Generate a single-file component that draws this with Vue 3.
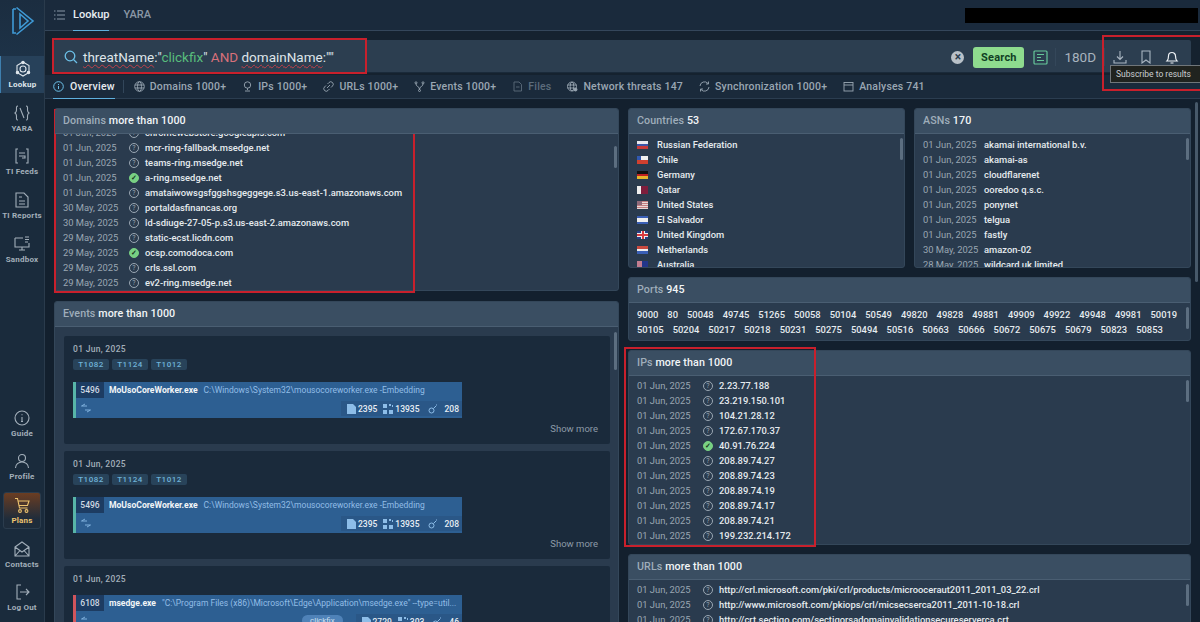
<script setup>
const navTop = [
  { label: 'Lookup', icon: 'hex', active: true },
  { label: 'YARA', icon: 'yara' },
  { label: 'TI Feeds', icon: 'feed' },
  { label: 'TI Reports', icon: 'report' },
  { label: 'Sandbox', icon: 'sandbox' }
]
const navBottom = [
  { label: 'Guide', icon: 'guide' },
  { label: 'Profile', icon: 'profile' },
  { label: 'Plans', icon: 'cart', plans: true },
  { label: 'Contacts', icon: 'mail' },
  { label: 'Log Out', icon: 'logout' }
]
const tabs = [
  { label: 'Domains 1000+', icon: 'globe' },
  { label: 'IPs 1000+', icon: 'pin' },
  { label: 'URLs 1000+', icon: 'link' },
  { label: 'Events 1000+', icon: 'fork' },
  { label: 'Files', icon: 'file', off: true },
  { label: 'Network threats 147', icon: 'net' },
  { label: 'Synchronization 1000+', icon: 'sync' },
  { label: 'Analyses 741', icon: 'cal' }
]
const domains = [
  ['01 Jun, 2025', 'chromewebstore.googleapis.com'],
  ['01 Jun, 2025', 'mcr-ring-fallback.msedge.net'],
  ['01 Jun, 2025', 'teams-ring.msedge.net'],
  ['01 Jun, 2025', 'a-ring.msedge.net', true],
  ['01 Jun, 2025', 'amataiwowsgsfggshsgeggege.s3.us-east-1.amazonaws.com'],
  ['30 May, 2025', 'portaldasfinancas.org'],
  ['30 May, 2025', 'ld-sdiuge-27-05-p.s3.us-east-2.amazonaws.com'],
  ['29 May, 2025', 'static-ecst.licdn.com'],
  ['29 May, 2025', 'ocsp.comodoca.com', true],
  ['29 May, 2025', 'crls.ssl.com'],
  ['29 May, 2025', 'ev2-ring.msedge.net']
]
const ips = [
  ['01 Jun, 2025', '2.23.77.188'],
  ['01 Jun, 2025', '23.219.150.101'],
  ['01 Jun, 2025', '104.21.28.12'],
  ['01 Jun, 2025', '172.67.170.37'],
  ['01 Jun, 2025', '40.91.76.224', true],
  ['01 Jun, 2025', '208.89.74.27'],
  ['01 Jun, 2025', '208.89.74.23'],
  ['01 Jun, 2025', '208.89.74.19'],
  ['01 Jun, 2025', '208.89.74.17'],
  ['01 Jun, 2025', '208.89.74.21'],
  ['01 Jun, 2025', '199.232.214.172']
]
const urls = [
  ['01 Jun, 2025', 'http://crl.microsoft.com/pki/crl/products/microoceraut2011_2011_03_22.crl'],
  ['01 Jun, 2025', 'http://www.microsoft.com/pkiops/crl/micsecserca2011_2011-10-18.crl'],
  ['01 Jun, 2025', 'http://crt.sectigo.com/sectigorsadomainvalidationsecureserverca.crt']
]
const countries = [
  ['ru', 'Russian Federation'],
  ['cl', 'Chile'],
  ['de', 'Germany'],
  ['qa', 'Qatar'],
  ['us', 'United States'],
  ['sv', 'El Salvador'],
  ['gb', 'United Kingdom'],
  ['nl', 'Netherlands'],
  ['au', 'Australia']
]
const asns = [
  ['01 Jun, 2025', 'akamai international b.v.'],
  ['01 Jun, 2025', 'akamai-as'],
  ['01 Jun, 2025', 'cloudflarenet'],
  ['01 Jun, 2025', 'ooredoo q.s.c.'],
  ['01 Jun, 2025', 'ponynet'],
  ['01 Jun, 2025', 'telgua'],
  ['01 Jun, 2025', 'fastly'],
  ['30 May, 2025', 'amazon-02'],
  ['28 May, 2025', 'wildcard uk limited']
]
const ports = [
  '9000', '80', '50048', '49745', '51265', '50058', '50104', '50549', '49820', '49828', '49881', '49909', '49922', '49948', '49981', '50019',
  '50105', '50204', '50217', '50218', '50231', '50275', '50494', '50516', '50663', '50666', '50672', '50675', '50679', '50823', '50853',
  '50887', '51105', '51155', '51217', '51233', '51340', '49750', '49884', '49910', '49933', '49957', '49915', '49953', '50151', '50140'
]
const events = [
  { tags: ['T1082', 'T1124', 'T1012'], pid: '5496', name: 'MoUsoCoreWorker.exe', cmd: 'C:\\Windows\\System32\\mousocoreworker.exe -Embedding', stats: ['2395', '13935', '208'], more: true },
  { tags: ['T1082', 'T1124', 'T1012'], pid: '5496', name: 'MoUsoCoreWorker.exe', cmd: 'C:\\Windows\\System32\\mousocoreworker.exe -Embedding', stats: ['2395', '13935', '208'], more: true },
  { tags: [], pid: '6108', name: 'msedge.exe', cmd: '"C:\\Program Files (x86)\\Microsoft\\Edge\\Application\\msedge.exe" --type=util...', stats: ['2729', '303', '46'], danger: true }
]
</script>

<template>
  <div class="app">
    <aside class="sidebar">
      <div class="logo">
        <svg width="26" height="30" viewBox="0 0 26 30" fill="none" stroke="#3f9ad6" stroke-width="1.6">
          <path d="M4 3v24l3 0M4 3h3" />
          <path d="M7.5 1.5 24 15 7.5 28.500" />
          <path d="M11 8 19 15 11 22Z" />
        </svg>
      </div>
      <div v-for="item in navTop" :key="item.label" :class="['nav-item', { active: item.active }]">
        <svg width="18" height="18" viewBox="0 0 18 18" fill="none" stroke="currentColor" stroke-width="1.100">
          <template v-if="item.icon === 'hex'">
            <path d="M9 2l6 3.500v7L9 16l-6-3.500v-7z" />
            <circle cx="9" cy="9" r="3" />
            <circle cx="9" cy="2.500" r="1.200" fill="currentColor" />
            <circle cx="3.500" cy="12.500" r="1.200" fill="currentColor" />
            <circle cx="14.500" cy="12.500" r="1.200" fill="currentColor" />
          </template>
          <template v-else-if="item.icon === 'yara'">
            <path d="M5 2C3 2 3.500 4 3.500 6S3.500 8 2 9c1.500 1 1.500 1 1.500 3s-.5 4 1.500 4M13 2c2 0 1.500 2 1.500 4s0 2 1.500 3c-1.500 1-1.500 1-1.500 3s.5 4-1.500 4M7 4l4 10" />
          </template>
          <template v-else-if="item.icon === 'feed'">
            <path d="M5 2H3v14h2M13 2h2v14h-2M6 6h6M6 9h6v2H9" />
          </template>
          <template v-else-if="item.icon === 'report'">
            <path d="M3 2h8l4 4v10H3zM6 6h3M6 10h6M6 13h6" />
          </template>
          <template v-else-if="item.icon === 'sandbox'">
            <path d="M2 3h8M2 3v9h14V8M6 15h6M9 12v3M12 2h4M12 4.500h4M12 7h3" />
          </template>
        </svg>
        <span>{{ item.label }}</span>
      </div>
      <div class="nav-spacer"></div>
      <div v-for="item in navBottom" :key="item.label" :class="['nav-item', { plans: item.plans }]">
        <svg width="18" height="18" viewBox="0 0 18 18" fill="none" stroke="currentColor" stroke-width="1.100">
          <template v-if="item.icon === 'guide'">
            <circle cx="9" cy="9" r="7" />
            <path d="M9 8v4.500M8 12.500h2M9 5.200v1" />
          </template>
          <template v-else-if="item.icon === 'profile'">
            <circle cx="9" cy="6" r="3.500" />
            <path d="M2.500 16c0-3.500 3-6 6.500-6s6.500 2.500 6.500 6" />
          </template>
          <template v-else-if="item.icon === 'cart'">
            <path d="M2 2.500h2.500l2 9.500h8M5 5h11l-1.500 4.500H6" />
            <circle cx="7" cy="15" r="1.400" />
            <circle cx="13.500" cy="15" r="1.400" />
          </template>
          <template v-else-if="item.icon === 'mail'">
            <path d="M2 7l7-5 7 5v9H2zM2 7l7 5 7-5M2 16l5-5.500M16 16l-5-5.500" />
          </template>
          <template v-else-if="item.icon === 'logout'">
            <path d="M8 2H4v14h4M7 9h9M13 6l3 3-3 3" />
          </template>
        </svg>
        <span>{{ item.label }}</span>
      </div>
    </aside>

    <div class="main">
      <header class="topbar">
        <svg class="menu-icon" width="11" height="10" viewBox="0 0 11 10" fill="none" stroke="#8796a5">
          <path d="M0 1h1.500M3 1h8M0 5h1.500M3 5h8M0 9h1.500M3 9h8" />
        </svg>
        <span class="top-tab current">Lookup</span>
        <span class="top-tab">YARA</span>
        <div class="redacted"></div>
      </header>

      <div class="query-wrap">
        <div class="query">
          <svg class="search-icon" width="14" height="14" viewBox="0 0 14 14" fill="none" stroke="#6cc0e8" stroke-width="1.300">
            <circle cx="6" cy="6" r="4.800" />
            <path d="M9.500 9.500 13 13" />
          </svg>
          <div class="query-text"><span class="squiggle">threatName</span>:"<span class="q-green">clickfix</span>" <span class="q-red">AND</span> <span class="squiggle">domainName</span>:""</div>
          <div class="clear">×</div>
          <button class="search-btn">Search</button>
          <svg class="doc-icon" width="15" height="15" viewBox="0 0 15 15" fill="none" stroke="#66c79a" stroke-width="1.200">
            <rect x="1" y="1" width="13" height="13" rx="1" />
            <path d="M4 4.500h7M4 7.500h4M4 10.500h7" />
          </svg>
          <i class="divider doc-divider"></i>
          <span class="range">180D</span>
          <i class="divider"></i>
          <svg class="act first" width="14" height="14" viewBox="0 0 14 14" fill="none" stroke="#aab6c2" stroke-width="1.100">
            <path d="M7 1v8M4 6.500 7 9.500l3-3M1 10v3h12v-3" />
          </svg>
          <svg class="act" width="14" height="14" viewBox="0 0 14 14" fill="none" stroke="#aab6c2" stroke-width="1.100">
            <path d="M3 1h8v12L7 10l-4 3z" />
          </svg>
          <svg class="act" width="14" height="14" viewBox="0 0 14 14" fill="none" stroke="#eef2f5" stroke-width="1.200">
            <path d="M2 11h10c-1-1-1.500-2-1.500-5a3.500 3.500 0 0 0-7 0c0 3-.5 4-1.500 5zM5.500 13h3" />
          </svg>
        </div>
      </div>

      <nav class="tabs">
        <div class="tab overview">
          <svg width="11" height="11" viewBox="0 0 11 11" fill="none" stroke="#6cc0e8">
            <circle cx="5.500" cy="5.500" r="4.800" />
            <path d="M5.500 5v3M5.500 3v1" />
          </svg>
          <span>Overview</span>
        </div>
        <i class="tab-sep"></i>
        <div v-for="tab in tabs" :key="tab.label" :class="['tab', { off: tab.off }]">
          <svg width="11" height="11" viewBox="0 0 11 11" fill="none" stroke="currentColor" stroke-width=".9">
            <template v-if="tab.icon === 'globe'">
              <circle cx="5.500" cy="5.500" r="4.800" />
              <ellipse cx="5.500" cy="5.500" rx="2" ry="4.800" />
              <path d="M1 4h9M1 7h9" />
            </template>
            <template v-else-if="tab.icon === 'pin'">
              <circle cx="5.500" cy="4" r="3.200" />
              <path d="M5.500 7.200V9M3 10h5" />
            </template>
            <template v-else-if="tab.icon === 'link'">
              <path d="M4.500 3 6 1.500a2 2 0 0 1 3.500 3.500L8 6.500M6.500 8 5 9.500A2 2 0 0 1 1.500 6L3 4.500M4 7l3-3" />
            </template>
            <template v-else-if="tab.icon === 'fork'">
              <circle cx="2" cy="1.800" r="1" />
              <circle cx="9" cy="1.800" r="1" />
              <circle cx="5.500" cy="9.500" r="1" />
              <path d="M2 3c0 3 3.500 2 3.500 5.500M9 3c0 3-3.500 2-3.500 5.500" />
            </template>
            <template v-else-if="tab.icon === 'file'">
              <path d="M2 1h5l2.500 2.500V10H2zM4 6h3.500" />
            </template>
            <template v-else-if="tab.icon === 'net'">
              <circle cx="5" cy="5.500" r="4.500" />
              <ellipse cx="5" cy="5.500" rx="1.800" ry="4.500" />
              <path d="M.5 4h9M.5 7h7" />
              <circle cx="8.500" cy="8.500" r="1.500" fill="currentColor" />
            </template>
            <template v-else-if="tab.icon === 'sync'">
              <path d="M1 5a4.500 4.500 0 0 1 8-2.500M10 6a4.500 4.500 0 0 1-8 2.500M9.500 .5v2.500H7M1.500 10.500V8H4" />
            </template>
            <template v-else-if="tab.icon === 'cal'">
              <rect x="1" y="1.500" width="9" height="8.500" />
              <path d="M1 4h9" />
            </template>
          </svg>
          <span>{{ tab.label }}</span>
        </div>
      </nav>

      <div class="content">
        <div class="col-left">
          <section class="panel domains">
            <h3 class="panel-head">Domains <b>more than 1000</b></h3>
            <div class="list clip-first">
              <div v-for="row in domains" :key="row[1]" class="row">
                <span class="date">{{ row[0] }}</span>
                <span :class="['status', { ok: row[2] }]">{{ row[2] ? '✓' : '?' }}</span>
                <span class="value">{{ row[1] }}</span>
              </div>
            </div>
            <i class="thumb thumb-domains"></i>
          </section>

          <section class="panel events">
            <h3 class="panel-head">Events <b>more than 1000</b></h3>
            <div class="event-list">
              <article v-for="(ev, i) in events" :key="i" class="event">
                <div class="event-date">01 Jun, 2025</div>
                <div v-if="ev.tags.length" class="event-tags">
                  <span v-for="t in ev.tags" :key="t" class="mitre">{{ t }}</span>
                </div>
                <div :class="['proc', { danger: ev.danger }]">
                  <div class="proc-top">
                    <span class="pid">{{ ev.pid }}</span>
                    <span class="proc-name">{{ ev.name }}</span>
                    <span class="proc-cmd">{{ ev.cmd }}</span>
                  </div>
                  <div class="proc-bottom">
                    <svg class="proc-arrows" width="12" height="10" viewBox="0 0 12 10" fill="none" stroke="#7fb0dc">
                      <path d="M5 1 1.500 3H7M7 9l3.500-2H5" />
                    </svg>
                    <span v-if="ev.danger" class="proc-flag">clickfix</span>
                    <div class="proc-stats">
                      <span class="stat">
                        <svg width="9" height="10" viewBox="0 0 9 10" fill="#8dbde8"><path d="M0 0h6l3 3v7H0z" /></svg>{{ ev.stats[0] }}
                      </span>
                      <span class="stat">
                        <svg width="10" height="10" viewBox="0 0 10 10" fill="#8dbde8"><path d="M0 0h4v4H0zM0 6h4v4H0zM6 6h4v4H6zM6 0h2v2H6zM9 1h1v2H9z" /></svg>{{ ev.stats[1] }}
                      </span>
                      <span class="stat">
                        <svg width="10" height="10" viewBox="0 0 10 10" fill="none" stroke="#8dbde8"><circle cx="3.500" cy="6.500" r="2.500" /><path d="M5.500 4.500 8 2M8.500 .5v1" /></svg><em>{{ ev.stats[2] }}</em>
                      </span>
                    </div>
                  </div>
                </div>
                <div v-if="ev.more" class="show-more">Show more</div>
              </article>
            </div>
            <i class="thumb thumb-events"></i>
          </section>
        </div>

        <div class="col-right">
          <div class="pair">
            <section class="panel small">
              <h3 class="panel-head">Countries <b>53</b></h3>
              <div class="list">
                <div v-for="c in countries" :key="c[0]" class="row">
                  <span :class="['flag', 'flag-' + c[0]]"></span>
                  <span class="value">{{ c[1] }}</span>
                </div>
              </div>
              <i class="thumb thumb-small"></i>
            </section>
            <section class="panel small">
              <h3 class="panel-head">ASNs <b>170</b></h3>
              <div class="list">
                <div v-for="a in asns" :key="a[1]" class="row">
                  <span class="date asn-date">{{ a[0] }}</span>
                  <span class="value">{{ a[1] }}</span>
                </div>
              </div>
              <i class="thumb thumb-small"></i>
            </section>
          </div>

          <section class="panel ports">
            <h3 class="panel-head">Ports <b>945</b></h3>
            <div class="port-list">
              <span v-for="p in ports" :key="p">{{ p }}</span>
            </div>
            <i class="thumb thumb-ports"></i>
          </section>

          <section class="panel ips">
            <h3 class="panel-head">IPs <b>more than 1000</b></h3>
            <div class="list">
              <div v-for="row in ips" :key="row[1]" class="row">
                <span class="date">{{ row[0] }}</span>
                <span :class="['status', { ok: row[2] }]">{{ row[2] ? '✓' : '?' }}</span>
                <span class="value">{{ row[1] }}</span>
              </div>
            </div>
            <i class="thumb thumb-small"></i>
          </section>

          <section class="panel urls">
            <h3 class="panel-head">URLs <b>more than 1000</b></h3>
            <div class="list">
              <div v-for="row in urls" :key="row[1]" class="row">
                <span class="date">{{ row[0] }}</span>
                <span class="status">?</span>
                <span class="value">{{ row[1] }}</span>
              </div>
            </div>
            <i class="thumb thumb-small"></i>
          </section>
        </div>
        <i class="page-thumb"></i>
      </div>
    </div>

    <!-- red marks drawn over the capture -->
    <div class="mark mark-query"></div>
    <div class="mark mark-domains"></div>
    <div class="mark mark-ips"></div>
    <div class="mark mark-actions"></div>
    <div class="tooltip">Subscribe to results</div>
  </div>
</template>

<style>
html, body {
  margin: 0;
  background: #13202e;
}
</style>

<style scoped>
.app {
  position: relative;
  display: flex;
  width: 1200px;
  height: 622px;
  overflow: hidden;
  background: #13202e;
  font-family: Roboto, "Liberation Sans", sans-serif;
  color: #e4e9ee;
}

/* sidebar */
.sidebar {
  width: 44px;
  flex-shrink: 0;
  display: flex;
  flex-direction: column;
  background: #1a2b3c;
  border-right: 1px solid #2a3b4c;
}
.logo {
  height: 56px;
  flex-shrink: 0;
  display: flex;
  justify-content: center;
  padding-top: 6px;
  box-sizing: border-box;
  background: linear-gradient(180deg, #1b2d40, #1d3247);
}
.nav-item {
  height: 37px;
  margin-bottom: 6.700px;
  flex-shrink: 0;
  box-sizing: border-box;
  display: flex;
  flex-direction: column;
  align-items: center;
  justify-content: center;
  gap: 2px;
  color: #a3afba;
  font-size: 8px;
  font-weight: 700;
  letter-spacing: .2px;
  white-space: nowrap;
}
.nav-item:last-child {
  margin-bottom: 5.700px;
}
.nav-item.active {
  color: #dfe6ec;
  background: #27415a;
  border-left: 1px solid #3e7fae;
}
.nav-item.plans {
  margin: 0 3px 6.700px;
  color: #eec46f;
  border: 1px solid #2b3c4d;
  border-radius: 3px;
  background: linear-gradient(180deg, #6b3d22, #1e2c3b 75%);
}
.nav-spacer {
  flex: 1;
}

/* top */
.main {
  flex: 1;
  min-width: 0;
  display: flex;
  flex-direction: column;
}
.topbar {
  height: 30px;
  flex-shrink: 0;
  display: flex;
  align-items: center;
  padding-left: 9px;
  background: #1a2a3c;
  border-bottom: 1px solid #34465a;
}
.menu-icon {
  margin-right: 8px;
}
.top-tab {
  position: relative;
  margin-right: 14px;
  font-size: 11px;
  font-weight: 500;
  color: #8a98a6;
  line-height: 30px;
}
.top-tab.current {
  color: #e8edf2;
}
.top-tab.current::after {
  content: "";
  position: absolute;
  left: 0;
  right: 0;
  bottom: -1px;
  height: 1px;
  background: #5fb0de;
}
.redacted {
  width: 233px;
  height: 15px;
  margin-left: auto;
  margin-right: 2px;
  background: #000;
}
.query-wrap {
  height: 44px;
  flex-shrink: 0;
  box-sizing: border-box;
  padding: 9px 9px 0 8px;
  background: #15222f;
}
.query {
  height: 33px;
  display: flex;
  align-items: center;
  padding: 2px 0 0 11px;
  box-sizing: border-box;
  background: #2c3e50;
  border-radius: 2px 2px 0 0;
  border-bottom: 1px solid #1a2a3a;
}
.query-text {
  margin-left: 5px;
  font-size: 13.500px;
  color: #dfe5ea;
  white-space: nowrap;
}
.squiggle {
  text-decoration: underline wavy #c2404a 1px;
  text-underline-offset: 2px;
}
.q-green {
  color: #58bd7c;
}
.q-red {
  color: #d8707a;
}
.clear {
  width: 13px;
  height: 13px;
  margin-left: auto;
  border-radius: 50%;
  background: #b9c1c8;
  color: #2c3e50;
  font-size: 12px;
  font-weight: 700;
  line-height: 13px;
  text-align: center;
}
.search-btn {
  width: 51px;
  height: 21px;
  margin-left: 9px;
  padding: 0;
  border: 0;
  border-radius: 3px;
  background: #8edb8e;
  color: #123f24;
  font-family: inherit;
  font-size: 11px;
  font-weight: 700;
  letter-spacing: .2px;
}
.doc-icon {
  margin-left: 9px;
}
.divider {
  width: 1px;
  height: 18px;
  margin-left: 8px;
  background: #34475a;
}
.doc-divider {
  margin-left: 7px;
}
.range {
  margin-left: 8px;
  font-size: 13.500px;
  color: #a8b3be;
}
.act {
  margin-left: 12px;
}
.act.first {
  margin-left: 8px;
}
.act:last-child {
  margin-right: 12px;
}
.tabs {
  height: 24px;
  flex-shrink: 0;
  box-sizing: border-box;
  display: flex;
  align-items: center;
  padding-left: 8px;
  gap: 16px;
  background: #1a2a3b;
  border-bottom: 1px solid #2b3d50;
}
.tab {
  display: flex;
  align-items: center;
  gap: 5px;
  font-size: 10.500px;
  font-weight: 500;
  letter-spacing: .2px;
  color: #9aa7b3;
  white-space: nowrap;
}
.tab.overview {
  position: relative;
  height: 100%;
  gap: 6px;
  color: #e6ebef;
}
.tab.overview::after {
  content: "";
  position: absolute;
  left: 0;
  right: 0;
  bottom: -1px;
  height: 1px;
  background: #5fb0de;
}
.tab.off {
  color: #5c6c7c;
}
.tab-sep {
  width: 1px;
  height: 13px;
  margin: 0 -6px 0 -8px;
  background: #32465a;
}

/* panels */
.content {
  position: relative;
  flex: 1;
  min-height: 0;
  display: flex;
  gap: 9px;
  padding: 9px 9px 0 9px;
  overflow: hidden;
  background: #13202e;
}
.col-left {
  width: 565px;
  flex-shrink: 0;
  display: flex;
  flex-direction: column;
  gap: 10px;
}
.col-right {
  width: 563px;
  flex-shrink: 0;
  display: flex;
  flex-direction: column;
  gap: 9px;
}
.pair {
  display: flex;
  gap: 9px;
}
.panel {
  position: relative;
  flex-shrink: 0;
  overflow: hidden;
  background: #2a3b4e;
  border: 1px solid #34475a;
  border-radius: 3px;
  box-sizing: border-box;
}
.panel-head {
  height: 25px;
  margin: 0;
  padding-left: 8px;
  box-sizing: border-box;
  background: #3a4e62;
  border-bottom: 1px solid #4a5e72;
  font-size: 10.700px;
  font-weight: 500;
  line-height: 24px;
  letter-spacing: .1px;
  color: #9fadba;
}
.panel-head b {
  font-weight: 500;
  color: #f2f5f7;
}
.domains {
  height: 183px;
}
.events {
  height: 330px;
}
.small {
  width: 277px;
  height: 160px;
}
.ports {
  height: 64px;
}
.ips {
  height: 195px;
}
.urls {
  height: 80px;
}
.list {
  padding-top: 3px;
}
.ips .list,
.urls .list {
  padding-top: 2px;
}
.clip-first {
  padding-top: 0;
  margin-top: -9px;
}
.domains .list {
  position: relative;
  z-index: 0;
}
.domains .panel-head {
  position: relative;
  z-index: 1;
}
.row {
  height: 15px;
  display: flex;
  align-items: center;
  padding-left: 8px;
  font-size: 9.400px;
  white-space: nowrap;
}
.date {
  width: 66px;
  flex-shrink: 0;
  color: #9aa7b3;
}
.asn-date {
  width: 61px;
}
.value {
  font-weight: 500;
  color: #e6ebef;
}
.status {
  width: 10px;
  height: 10px;
  margin-right: 6px;
  flex-shrink: 0;
  box-sizing: border-box;
  border: 1px solid #9aa7b3;
  border-radius: 50%;
  color: #9aa7b3;
  font-size: 7px;
  line-height: 8px;
  text-align: center;
}
.status.ok {
  background: #78d083;
  border-color: #78d083;
  color: #17331f;
  font-weight: 700;
}
.thumb {
  position: absolute;
  right: 1px;
  width: 3px;
  background: #5c6e80;
  border-radius: 2px;
}
.thumb-domains {
  top: 37px;
  height: 22px;
}
.thumb-events {
  top: 30px;
  height: 38px;
}
.thumb-small {
  top: 29px;
  height: 22px;
}
.thumb-ports {
  top: 29px;
  height: 22px;
}
.page-thumb {
  position: absolute;
  right: 2px;
  top: 3px;
  width: 3px;
  height: 180px;
  background: #47596a;
  border-radius: 2px;
}

/* events */
.event-list {
  display: flex;
  flex-direction: column;
  gap: 7px;
  padding: 9px 8px 0 9px;
}
.event {
  flex-shrink: 0;
  box-sizing: border-box;
  min-height: 108px;
  padding: 8px 9px;
  background: #1a2a3b;
  border-radius: 2px;
}
.event-date {
  font-size: 8.500px;
  font-weight: 500;
  line-height: 11px;
  color: #a3afba;
  letter-spacing: .3px;
}
.event-tags {
  display: flex;
  gap: 3px;
  margin-top: 4px;
}
.mitre {
  width: 36px;
  height: 11px;
  border-radius: 2px;
  background: #28435a;
  color: #6fb3d8;
  font-size: 8px;
  font-weight: 500;
  line-height: 11px;
  letter-spacing: .5px;
  text-align: center;
}
.proc {
  width: 389px;
  height: 36px;
  margin-top: 12px;
  box-sizing: border-box;
  border-left: 3px solid #58b5a8;
  background: #2d5f92;
}
.event-date + .proc {
  margin-top: 10px;
}
.proc.danger {
  border-left-color: #d0555c;
}
.proc-top {
  display: flex;
  align-items: center;
  height: 16px;
  white-space: nowrap;
  overflow: hidden;
}
.pid {
  width: 28px;
  height: 16px;
  flex-shrink: 0;
  background: #1d3c62;
  color: #cfd9e3;
  font-size: 8.500px;
  font-weight: 500;
  line-height: 16px;
  text-align: center;
}
.proc-name {
  margin-left: 5px;
  font-size: 8.600px;
  font-weight: 700;
  color: #f2f5f7;
}
.proc-cmd {
  margin-left: 6px;
  font-size: 8.500px;
  color: #92bde6;
}
.proc-bottom {
  position: relative;
  display: flex;
  align-items: flex-start;
  height: 20px;
  padding-left: 4px;
}
.proc-arrows {
  margin-top: 5px;
}
.proc-flag {
  position: absolute;
  left: 226px;
  top: 4px;
  padding: 0 8px;
  border-radius: 6px;
  background: #4f82b8;
  color: #cfe0f0;
  font-size: 8px;
  line-height: 11px;
}
.proc-stats {
  display: flex;
  align-items: center;
  gap: 2px;
  height: 15px;
  margin-top: 3px;
  margin-left: auto;
  padding-left: 3px;
  background: #2a5787;
}
.stat {
  display: flex;
  align-items: center;
  gap: 2px;
  padding: 0 3px;
  font-size: 8.500px;
  font-weight: 500;
  color: #e8eef4;
}
.stat:first-child {
  margin-right: -2px;
}
.stat em {
  margin-left: 5px;
  font-style: normal;
}
.show-more {
  margin-top: 5px;
  margin-right: 3px;
  font-size: 9.500px;
  line-height: 12px;
  color: #8d9ba8;
  text-align: right;
}

/* countries and ports */
.flag {
  width: 11px;
  height: 8px;
  margin-right: 9px;
  flex-shrink: 0;
}
.flag-ru { background: linear-gradient(#e8e8ee 33%, #3c55a8 33% 66%, #c83a3a 66%); }
.flag-cl { background: linear-gradient(90deg, #3158b0 4px, transparent 4px) top / 100% 50% no-repeat, linear-gradient(#f0f0f0 50%, #d0402f 50%); }
.flag-de { background: linear-gradient(#111 33%, #c02020 33% 66%, #e6b52c 66%); }
.flag-qa { background: linear-gradient(90deg, #eee 4px, #7d1e3c 4px); }
.flag-us { background: linear-gradient(90deg, #8f6a7a 5px, transparent 5px) top / 100% 50% no-repeat, repeating-linear-gradient(#c27d80 0 1px, #e8d8d8 1px 2px); }
.flag-sv { background: linear-gradient(#3a5fb5 30%, #eee 30% 70%, #3a5fb5 70%); }
.flag-gb { background: linear-gradient(#d83a40, #d83a40) center / 100% 2px no-repeat, linear-gradient(#d83a40, #d83a40) center / 2px 100% no-repeat, linear-gradient(#eee, #eee) center / 100% 4px no-repeat, linear-gradient(#eee, #eee) center / 4px 100% no-repeat, #2a3f88; }
.flag-nl { background: linear-gradient(#c84a40 33%, #eee 33% 66%, #3a5fb5 66%); }
.flag-au { background: linear-gradient(90deg, #c27d90 5px, #23368a 5px); }
.port-list {
  display: flex;
  flex-wrap: wrap;
  gap: 0 9px;
  padding: 3.500px 10px 0 8px;
  font-size: 9.400px;
  font-weight: 500;
  line-height: 15px;
  color: #e6ebef;
}

/* red marks */
.mark {
  position: absolute;
  box-sizing: border-box;
  border: 2px solid #c8202c;
  pointer-events: none;
}
.mark-query { left: 52px; top: 38px; width: 315px; height: 36px; }
.mark-domains { left: 54px; top: 109px; width: 361px; height: 184px; }
.mark-ips { left: 624px; top: 347px; width: 192px; height: 200px; }
.mark-actions { left: 1102px; top: 35px; width: 100px; height: 56px; }
.tooltip {
  position: absolute;
  left: 1110px;
  top: 65px;
  width: 96px;
  height: 18px;
  box-sizing: border-box;
  padding-left: 5px;
  background: #20231f;
  border: 1px solid #70767a;
  color: #c9cdd0;
  font-size: 8.500px;
  line-height: 16px;
  white-space: nowrap;
}
</style>
